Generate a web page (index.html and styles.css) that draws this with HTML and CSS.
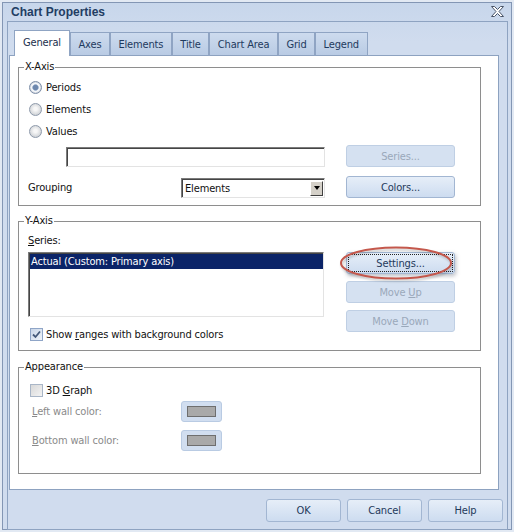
FILE: index.html
```html
<!DOCTYPE html>
<html lang="en">
<head>
    <meta charset="UTF-8">
    <title>Chart Properties</title>
    <link rel="stylesheet" href="styles.css">
</head>
<body>
    <div class="window">
        <div class="titlebar">
            <span class="title">Chart Properties</span>
            <svg class="close" width="13" height="11" viewBox="0 0 13 11">
                <path d="M0.5 0.5 H3.5 L6.5 3.5 L9.5 0.5 H12.5 L8 5.5 L12.5 10.5 H9.5 L6.5 7.5 L3.5 10.5 H0.5 L5 5.5 Z" fill="#fff" stroke="#4a5568" stroke-width="1" stroke-linejoin="round"/>
            </svg>
        </div>

        <div class="frame">
            <div class="tabs">
                <div class="tab active">General</div>
                <div class="tab">Axes</div>
                <div class="tab">Elements</div>
                <div class="tab">Title</div>
                <div class="tab">Chart Area</div>
                <div class="tab">Grid</div>
                <div class="tab">Legend</div>
            </div>

            <div class="panel">
                <!-- X axis -->
                <fieldset class="group group-x">
                    <legend>X-Axis</legend>
                    <div class="x-grid">
                        <label class="opt"><span class="radio on"></span><span>Periods</span></label>
                        <label class="opt"><span class="radio"></span><span>Elements</span></label>
                        <label class="opt"><span class="radio"></span><span>Values</span></label>
                        <div class="textbox"></div>
                        <button class="btn" disabled>Series...</button>
                        <span class="grouping">Grouping</span>
                        <div class="select">
                            <span>Elements</span>
                            <span class="arrow"></span>
                        </div>
                        <button class="btn">Colors...</button>
                    </div>
                </fieldset>

                <!-- Y axis -->
                <fieldset class="group group-y">
                    <legend>Y-Axis</legend>
                    <div class="y-grid">
                        <span class="series-label"><u>S</u>eries:</span>
                        <div class="list-col">
                            <div class="listbox">
                                <div class="list-item selected">Actual (Custom: Primary axis)</div>
                            </div>
                            <label class="check-row">
                                <span class="cbox">
                                    <svg width="11" height="11" viewBox="0 0 11 11">
                                        <path d="M2 5.5 L4.5 8 L9 2.5" fill="none" stroke="#44597a" stroke-width="1.8"/>
                                    </svg>
                                </span>
                                <span>Show <u>r</u>anges with background colors</span>
                            </label>
                        </div>
                        <div class="btn-col">
                            <div class="settings-wrap">
                                <button class="btn focused">Settings...</button>
                                <svg class="mark" width="116" height="36" viewBox="0 0 116 36">
                                    <ellipse cx="57" cy="18" rx="55" ry="15.5" fill="none" stroke="#c4584c" stroke-width="2"/>
                                </svg>
                            </div>
                            <button class="btn" disabled>Move <u>U</u>p</button>
                            <button class="btn" disabled>Move <u>D</u>own</button>
                        </div>
                    </div>
                </fieldset>

                <!-- Appearance -->
                <fieldset class="group group-a">
                    <legend>Appearance</legend>
                    <div class="a-grid">
                        <label class="check-row wide"><span class="cbox off"></span><span>3D <u>G</u>raph</span></label>
                        <span class="a-label"><u>L</u>eft wall color:</span>
                        <div class="swatch-btn"><span class="swatch"></span></div>
                        <span class="a-label"><u>B</u>ottom wall color:</span>
                        <div class="swatch-btn"><span class="swatch"></span></div>
                    </div>
                </fieldset>
            </div>

            <div class="footer">
                <button class="btn">OK</button>
                <button class="btn">Cancel</button>
                <button class="btn">Help</button>
            </div>
        </div>
    </div>
</body>
</html>
```

FILE: styles.css
```css
* {
    margin: 0;
    padding: 0;
    box-sizing: border-box;
}

body {
    background: #cfdcee;
    font-family: 'DejaVu Sans Condensed', 'Liberation Sans', sans-serif;
    font-size: 11px;
    letter-spacing: -0.15px;
    color: #111;
}

u {
    text-decoration-thickness: 1px;
    text-underline-offset: 1px;
}

/* 窗口外框 */
.window {
    width: 514px;
    height: 532px;
    border: 2px solid #e2e9f3;
    box-shadow: inset 0 0 0 1px #8396b4;
    background: linear-gradient(#c7d6eb, #d0dcee 40px);
    display: flex;
    flex-direction: column;
}

.titlebar {
    height: 19px;
    display: flex;
    align-items: center;
    justify-content: space-between;
    padding: 0 8px 0 9px;
}

.title {
    font-family: 'Liberation Sans', sans-serif;
    font-size: 12px;
    font-weight: bold;
    letter-spacing: 0;
    color: #223d63;
}

.frame {
    flex: 1;
    margin: 0 4px 0 5px;
    border: 1px solid #8ea3c1;
    display: flex;
    flex-direction: column;
}

/* 选项卡 */
.tabs {
    display: flex;
    align-items: flex-end;
    padding: 8px 0 0 6px;
    margin-bottom: -1px;
    position: relative;
    z-index: 1;
}

.tab {
    height: 24px;
    padding: 0 7.5px;
    display: flex;
    align-items: center;
    color: #1e3a5e;
    background: linear-gradient(#cddbee, #b9cbe4);
    border: 1px solid #8fa4c3;
    border-bottom-color: #8da2c0;
}

.tab.active {
    height: 26px;
    padding: 0 8px 2px 8px;
    background: #fff;
    border-bottom: none;
    color: #1a2f4d;
}

.panel {
    margin-left: 1px;
    width: 490px;
    height: 435px;
    background: #fff;
    border: 1px solid #8da2c0;
    padding: 4px 8px 0 8px;
}

/* 分组框 */
.group {
    width: 463px;
    border: 1px solid #8e8e8e;
    padding: 2px 9px 7px 9px;
}

.group legend {
    margin-left: -4px;
    padding: 0 1px;
    line-height: 14px;
}

.group-y {
    margin-top: 8px;
    padding: 6px 9px 9px 9px;
}

.group-a {
    margin-top: 9px;
    padding: 9px 9px 22px 9px;
}

/* X-Axis */
.x-grid {
    display: grid;
    grid-template-columns: 38px 115px 144px 130px;
    grid-template-rows: 22px 22px 22px 25px 31px;
    align-items: center;
}

.opt {
    grid-column: 1 / 4;
    display: flex;
    align-items: center;
    gap: 4px;
    padding-left: 1px;
}

.radio {
    width: 13px;
    height: 13px;
    border-radius: 50%;
    border: 1px solid #8e9aab;
    background: radial-gradient(circle at 50% 45%, #f7f7f7 20%, #cfd2d6 75%);
}

.radio.on {
    border-color: #7d8ea8;
    background: radial-gradient(circle, #6d87ad 0 2.2px, #a9bbd4 3px, #f4f6f9 3.6px 4.2px, #cdd3dc 5.5px);
}

.textbox {
    grid-column: 2 / 4;
    align-self: end;
    height: 20px;
    background: #fff;
    border: 1px solid;
    border-color: #7b7b7b #e3e3e3 #e3e3e3 #7b7b7b;
    box-shadow: inset 1px 1px 0 #454545;
}

.grouping {
    grid-column: 1 / 3;
    align-self: end;
    line-height: 20px;
}

.select {
    grid-column: 3;
    align-self: end;
    height: 20px;
    display: flex;
    align-items: center;
    justify-content: space-between;
    padding: 0 1px 0 3px;
    background: #fff;
    border: 1px solid;
    border-color: #7b7b7b #e3e3e3 #e3e3e3 #7b7b7b;
    box-shadow: inset 1px 1px 0 #454545;
}

.arrow {
    width: 13px;
    height: 15px;
    background: #d4d0c8;
    border: 1px solid;
    border-color: #fff #404040 #404040 #fff;
    display: flex;
    align-items: center;
    justify-content: center;
}

.arrow::after {
    content: '';
    border-top: 4px solid #000;
    border-left: 3.5px solid transparent;
    border-right: 3.5px solid transparent;
}

/* 按钮 */
.btn {
    font: inherit;
    letter-spacing: inherit;
    width: 109px;
    height: 22px;
    color: #1e395b;
    background: linear-gradient(#e6eef8, #cddcf0);
    border: 1px solid #a2b6d2;
    border-radius: 3px;
    justify-self: end;
    align-self: end;
}

.btn:disabled {
    color: #9aa8ba;
    background: #d5e1f1;
    border-color: #bfcfe4;
}

.btn.focused {
    outline: 1px dotted #222;
    outline-offset: -3px;
    box-shadow: 1px 2px 4px rgba(60, 70, 90, 0.35);
}

/* Y-Axis */
.y-grid {
    display: grid;
    grid-template-columns: 296px 131px;
}

.series-label {
    grid-column: 1 / 3;
    line-height: 14px;
    margin-bottom: 4px;
}

.list-col {
    display: flex;
    flex-direction: column;
}

.listbox {
    height: 65px;
    padding: 1px 0 0 1px;
    background: #fff;
    border: 1px solid;
    border-color: #7b7b7b #e3e3e3 #e3e3e3 #7b7b7b;
    box-shadow: inset 1px 1px 0 #454545;
}

.list-item {
    height: 15px;
    line-height: 15px;
    padding-left: 1px;
}

.list-item.selected {
    background: #0b2468;
    color: #fff;
}

.check-row {
    display: flex;
    align-items: center;
    gap: 3px;
    height: 14px;
    padding-left: 2px;
    margin-top: 10px;
}

.cbox {
    width: 13px;
    height: 13px;
    display: flex;
    align-items: center;
    justify-content: center;
    border: 1px solid #8fa5c7;
    background: linear-gradient(135deg, #c9d6e8, #eef3f9);
}

.cbox.off {
    border-color: #a9b6c7;
    background: linear-gradient(135deg, #d8d8d8, #f3f3f3);
}

.btn-col {
    display: flex;
    flex-direction: column;
    align-items: flex-end;
    gap: 7px;
}

.settings-wrap {
    position: relative;
}

/* 红色圈注 */
.mark {
    position: absolute;
    left: -7px;
    top: -7px;
    filter: drop-shadow(1px 2px 1px rgba(0, 0, 0, 0.2));
}

/* Appearance */
.a-grid {
    display: grid;
    grid-template-columns: 153px 41px;
    grid-template-rows: 14px 25px 29px;
}

.check-row.wide {
    grid-column: 1 / 3;
    margin-top: 0;
}

.a-label {
    align-self: end;
    line-height: 21px;
    padding-left: 4px;
    color: #8a8a8a;
}

.swatch-btn {
    align-self: end;
    height: 21px;
    display: flex;
    align-items: center;
    justify-content: center;
    background: #d1def0;
    border: 1px solid #b9cbe3;
    border-radius: 3px;
}

.swatch {
    width: 29px;
    height: 11px;
    background: #a9a9a9;
    border: 1px solid #6e6e6e;
}

/* 底部按钮 */
.footer {
    display: flex;
    justify-content: flex-end;
    gap: 6px;
    margin-top: 9px;
    padding-right: 4px;
}

.footer .btn {
    width: 75px;
    height: 23px;
}
```
